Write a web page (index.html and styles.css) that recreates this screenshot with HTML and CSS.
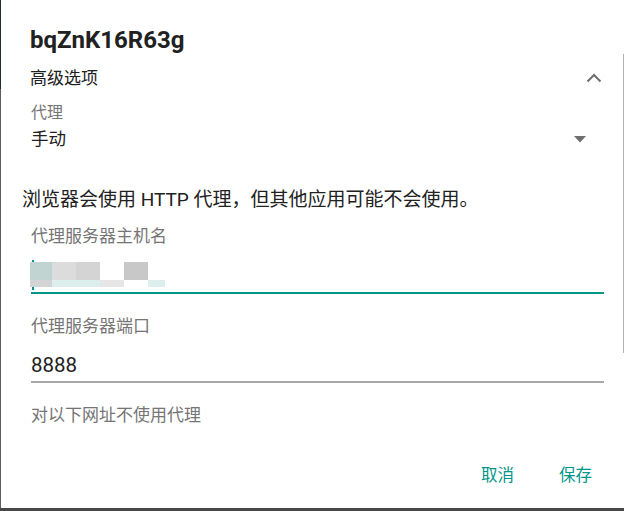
FILE: index.html
```html
<!DOCTYPE html>
<html lang="zh-CN">
<head>
<meta charset="utf-8">
<title>bqZnK16R63g</title>
<link rel="stylesheet" href="styles.css">
</head>
<body>
<div class="dialog">
  <h1 class="title">bqZnK16R63g</h1>
  <div class="section-row">
    <span class="section">高级选项</span>
    <svg class="chevron" width="16" height="10" viewBox="0 0 16 10"><path d="M1.5 8.5 L8 2 L14.5 8.5" fill="none" stroke="#6f6f6f" stroke-width="2"/></svg>
  </div>
  <div class="label first">代理</div>
  <div class="select-row">
    <span class="value">手动</span>
    <svg class="caret" width="12" height="7" viewBox="0 0 12 7"><path d="M0 0 H12 L6 6.5 Z" fill="#6f6f6f"/></svg>
  </div>
  <p class="desc">浏览器会使用 HTTP 代理，但其他应用可能不会使用。</p>
  <div class="label">代理服务器主机名</div>
  <div class="field focused">
    <span class="cursor"></span>
    <div class="blur">
      <div class="blur-row top">
        <span class="px w22 c1"></span><span class="px w24 c2"></span><span class="px w24 c3"></span><span class="px w24"></span><span class="px w24 c4"></span>
      </div>
      <div class="blur-row bottom">
        <span class="px w22 c3"></span><span class="px w48 c5"></span><span class="px w24 c6"></span><span class="px w24"></span><span class="px w17 c5"></span>
      </div>
    </div>
  </div>
  <div class="label gap">代理服务器端口</div>
  <div class="field plain"><span class="num">8888</span></div>
  <div class="label gap">对以下网址不使用代理</div>
  <div class="actions">
    <span class="btn">取消</span>
    <span class="btn">保存</span>
  </div>
  <span class="scroll"></span>
</div>
<div class="shadow"></div>
</body>
</html>
```
FILE: styles.css
```css
html, body {
  margin: 0;
  padding: 0;
  background: #ffffff;
}
body {
  width: 624px;
  height: 511px;
  overflow: hidden;
  font-family: Roboto, "Noto Sans CJK SC", sans-serif;
  color: #212121;
}
.dialog {
  position: relative;
  box-sizing: border-box;
  height: 508px;
  border-left: 1px solid #5a5a5a;
  border-image: linear-gradient(to bottom, #1f2c34 0, #1f2c34 90px, #5e5e5e 90px, #5e5e5e 100%) 1;
  display: flex;
  flex-direction: column;
}
.title {
  margin: 26px 0 0 29px;
  font-size: 24px;
  line-height: 28px;
  font-weight: 700;
  color: #212121;
}
.section-row {
  margin-top: 12px;
  display: flex;
  align-items: center;
  justify-content: space-between;
  padding: 0 22px 0 29px;
  height: 24px;
}
.section {
  font-size: 17px;
  line-height: 24px;
}
.chevron { display: block; margin-top: -1px; }
.label {
  margin-left: 30px;
  font-size: 17px;
  line-height: 22px;
  color: #757575;
}
.label.first {
  margin-top: 13px;
  font-size: 16px;
  line-height: 20px;
}
.label.gap { margin-top: 21px; }
.label:not(.first):not(.gap) { margin-top: 12px; }
.select-row {
  margin-top: 4px;
  display: flex;
  align-items: center;
  justify-content: space-between;
  padding: 0 38px 0 30px;
  height: 24px;
}
.value {
  font-size: 17.5px;
  line-height: 24px;
  color: #212121;
}
.caret { display: block; margin-top: 1px; }
.desc {
  margin: 36px 0 0 21px;
  font-size: 19px;
  line-height: 26px;
  color: #212121;
}
.field {
  position: relative;
  margin: 0 20px 0 30px;
  box-sizing: border-box;
}
.field.focused {
  margin-top: 2px;
  height: 45px;
  border-bottom: 2px solid #009688;
  padding: 13px 0 0 0;
}
.blur {
  position: relative;
  display: flex;
  flex-direction: column;
  margin-left: -1px;
}
.blur-row { display: flex; }
.blur-row.top { height: 18px; }
.blur-row.bottom { height: 7px; }
.px { display: block; height: 100%; }
.w17 { width: 17px; }
.w22 { width: 22px; }
.w24 { width: 24px; }
.w48 { width: 48px; }
.c1 { background: #c1d4d2; }
.c2 { background: #dcdcdc; }
.c3 { background: #d4d4d4; }
.c4 { background: #c8c8c8; }
.c5 { background: #dcefed; }
.c6 { background: #e6e6e6; }
.cursor {
  position: absolute;
  left: 1px;
  top: 11px;
  width: 2px;
  height: 30px;
  background: #009688;
}
.field.plain {
  margin-top: 15px;
  border-bottom: 2px solid #a9a9a9;
  padding-bottom: 3px;
}
.num {
  display: block;
  font-size: 20.5px;
  line-height: 26px;
  color: #212121;
}
.actions {
  margin-top: 38px;
  display: flex;
  justify-content: flex-end;
  gap: 45px;
  padding-right: 32px;
}
.btn {
  font-size: 16.5px;
  line-height: 24px;
  color: #00968a;
}
.scroll {
  position: absolute;
  right: 0;
  top: 54px;
  width: 1px;
  height: 299px;
  background: #b3b3b3;
}
.shadow {
  height: 3px;
  background: #474747;
}
```
